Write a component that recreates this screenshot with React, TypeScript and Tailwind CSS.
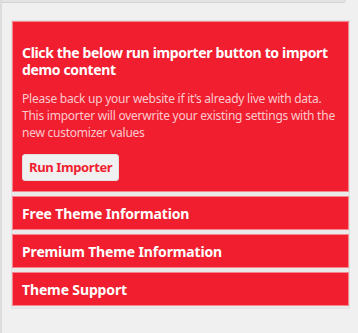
import React from "react";

const sections = [
  "Free Theme Information",
  "Premium Theme Information",
  "Theme Support",
];

export default function App() {
  return (
    <div
      className="relative w-[358px] h-[333px] bg-[#f0f0f0] border-l-2 border-[#dcdcdc] overflow-hidden"
      style={{ fontFamily: "'Noto Sans', 'Open Sans', sans-serif" }}
    >
      <div className="h-[3px] w-[344px] bg-[#e3e3e3] border-b border-[#d2d2d2] rounded-br-sm" />
      <div className="ml-[9px] mt-[17px] w-[339px] border border-[#e2e2e2] bg-[#e9e9e9] pb-[2px] flex flex-col gap-[4px]">
        <div className="bg-[#f11e30] border border-[#f4878f] px-[9px] pt-[22px] pb-[10px]">
          <h3 className="text-white font-bold text-[14px] leading-[17px] tracking-[-0.025em]">
            Click the below run importer button to import demo content
          </h3>
          <p className="mt-[12px] text-[#fcc9cd] text-[12px] leading-[17px] tracking-[-0.02em]">
            Please back up your website if it’s already live with data. This
            importer will overwrite your existing settings with the new
            customizer values
          </p>
          <button className="mt-[13px] h-[27px] px-[6px] bg-[#f0f0f0] border border-[#e0e0e0] rounded-[3px] text-[#f11e30] font-bold text-[13px] tracking-[-0.03em]">
            Run Importer
          </button>
        </div>
        {sections.map((s) => (
          <div
            key={s}
            className="h-[34px] bg-[#f11e30] border border-[#f4878f] px-[9px] flex items-center"
          >
            <span className="text-white font-bold text-[14px] tracking-[-0.01em]">{s}</span>
          </div>
        ))}
      </div>
    </div>
  );
}
